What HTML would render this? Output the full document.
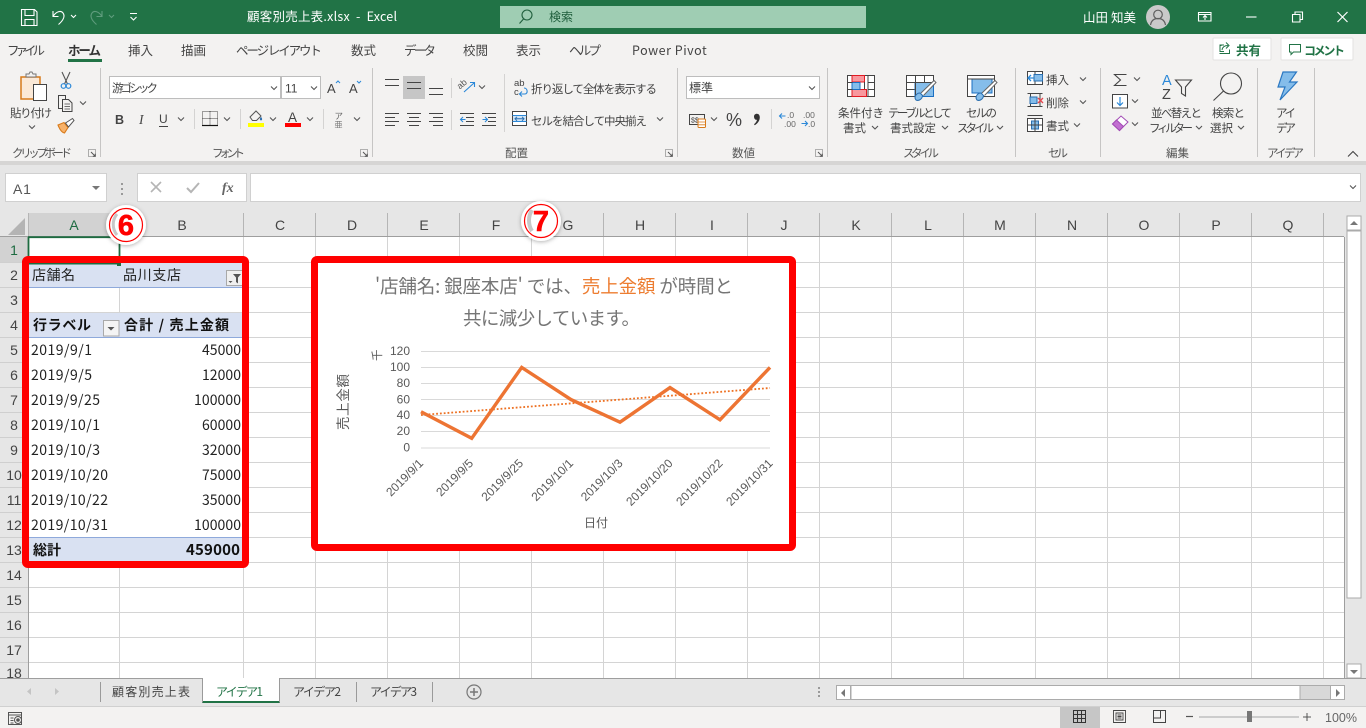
<!DOCTYPE html>
<html lang="ja"><head><meta charset="utf-8"><title>顧客別売上表.xlsx - Excel</title>
<style>
html,body{margin:0;padding:0;background:#fff;width:1366px;height:728px;overflow:hidden}
svg{display:block;position:absolute;left:0;top:0}
text{font-family:"Liberation Sans","Noto Sans CJK JP",sans-serif;white-space:pre}
.j{font-family:"Noto Sans CJK JP","Liberation Sans",sans-serif}
.s{font-family:"Liberation Serif",serif}
.r{font-size:11.5px;fill:#444}
.tab{font-size:12.5px;fill:#444}
.lb{font-size:11.5px;fill:#555}
.h{font-size:14px;fill:#444;text-anchor:middle}
.c{font-size:14px;fill:#222}
.g{font-size:11.5px;fill:#595959}
.gr{font-size:12px;fill:#595959;text-anchor:end}
.ln{fill:none;stroke:#444;stroke-width:1}
.ch{fill:none;stroke:#555;stroke-width:1.1}
</style></head><body>
<svg width="1366" height="728" viewBox="0 0 1366 728" xmlns="http://www.w3.org/2000/svg">
<defs>
<g id="chev"><path class="ch" d="M-3-1.5 0 1.5 3-1.5"/></g>
<g id="dlg"><path d="M-3.5-3.5h7v7h-7z" fill="none" stroke="#9a9a9a" stroke-width=".8"/><path d="M-1-1 3.2 3.2M3.2.8v2.4H.8" fill="none" stroke="#555" stroke-width="1"/></g>
<filter id="sh" x="-30%" y="-30%" width="160%" height="160%"><feDropShadow dx="0" dy="1" stdDeviation="2" flood-color="#000" flood-opacity=".3"/></filter>
</defs>

<!-- backgrounds -->
<rect width="1366" height="728" fill="#fff"/>
<rect width="1366" height="34" fill="#217346"/>
<rect y="34" width="1366" height="127" fill="#f3f2f1"/>
<rect y="161" width="1366" height="4" fill="#d6d5d4"/>
<rect y="165" width="1366" height="72" fill="#e6e6e6"/>

<!-- title bar -->
<g fill="none" stroke="#fff" stroke-width="1.1">
<path d="M21.5 9.5h13l2.5 2.5v13.500h-15.500zM25 9.500v6h9v-6M25 25.500v-6h9v6"/>
<path d="M53 11v5.500h5.500M53 16.500c3-5 8-6.500 10-3.500 2.500 3.500-.5 8-4.500 11.500"/>
<path d="M71 15l2.500 2.500L76 15"/>
<g stroke="#5f9c7d"><path d="M102 11v5.500h-5.500M102 16.500c-3-5-8-6.500-10-3.500-2.500 3.500.5 8 4.500 11.500"/><path d="M109 15l2.500 2.500 2.500-2.500"/></g>
<path d="M130 13.500h7M130.500 17l3 3 3-3"/>
</g>
<text class="j" x="247" y="21" font-size="12.5" fill="#fff" textLength="150">顧客別売上表.xlsx  -  Excel</text>
<rect x="500" y="6" width="366" height="22" fill="#9fcdb3"/>
<g fill="none" stroke="#1f5e3c" stroke-width="1.1"><circle cx="527" cy="15" r="5"/><path d="M523.500 19 519.500 23.500"/></g>
<text class="j" x="549" y="21" font-size="12" fill="#1f5e3c">検索</text>
<text class="j" x="1083" y="22" font-size="12.5" fill="#fff" textLength="53">山田 知美</text>
<circle cx="1158" cy="17" r="12" fill="#c9c9c9"/>
<g fill="none" stroke="#5f5f5f" stroke-width="1.2"><circle cx="1158" cy="14.500" r="4.300"/><path d="M1150.500 25c.8-4.500 3.500-6.500 7.500-6.500s6.700 2 7.500 6.500"/></g>
<g fill="none" stroke="#fff" stroke-width="1.1">
<path d="M1198.500 12.500h12.500v8.500h-12.500zM1198.500 14.500h12.500M1205 20v-4M1203 17.500l2-2 2 2"/>
<path d="M1246 17h10.500"/>
<path d="M1292.500 14.500h7.500v7.500h-7.500zM1295 14.500v-2.500h7.500v7.500h-2.500"/>
<path d="M1337.500 12 1347.500 22M1347.500 12 1337.500 22" stroke-width="1.2"/>
</g>

<!-- tabs -->
<g class="j">
<text class="tab j" x="7" y="55" textLength="38">ファイル</text>
<text class="tab j" x="68" y="55" textLength="33" font-weight="700" style="fill:#333">ホーム</text>
<text class="tab j" x="128" y="55">挿入</text>
<text class="tab j" x="181" y="55">描画</text>
<text class="tab j" x="236" y="55" textLength="86">ページ レイアウト</text>
<text class="tab j" x="351" y="55">数式</text>
<text class="tab j" x="404" y="55" textLength="32">データ</text>
<text class="tab j" x="463" y="55">校閲</text>
<text class="tab j" x="516" y="55">表示</text>
<text class="tab j" x="569" y="55" textLength="32">ヘルプ</text>
<text class="tab j" x="632" y="55" textLength="75" style="letter-spacing:.3px">Power Pivot</text>
</g>
<rect x="68" y="59" width="34" height="3" fill="#217346"/>
<rect x="1213" y="38" width="58" height="22" rx="1" fill="#fff" stroke="#e3e2e1"/>
<path d="M1221 46v-1h3M1224 51.500h-4v-7M1222 50c.5-3 2.500-4.500 6-4.500M1226 42.500l3 3-3 3M1219.500 53.500h10v-4" fill="none" stroke="#217346" stroke-width="1"/>
<text class="j" x="1236" y="55" font-size="12.5" font-weight="700" fill="#217346">共有</text>
<rect x="1281" y="38" width="72" height="22" rx="1" fill="#fff" stroke="#e3e2e1"/>
<path d="M1289.500 44.500h11v7.500h-7l-2.500 2.500v-2.500h-1.500z" fill="none" stroke="#217346"/>
<text class="j" x="1304" y="55" font-size="12" font-weight="700" fill="#217346" textLength="41">コメント</text>

<!-- separators -->
<g stroke="#c6c5c4" stroke-width="1"><path d="M100.500 68v89M372.500 68v89M677.500 68v89M827.500 68v89M1015.500 68v89M1100.500 68v89M1257.500 68v89M1314.500 68v89"/></g>
<g stroke="#d4d3d2" stroke-width="1"><path d="M194.500 109v20M240.500 109v20M323.500 109v20M451.500 78v20M451.500 110v20M504.500 74v58M771.500 109v20"/></g>

<!-- group labels -->
<g class="j">
<text class="lb j" x="12" y="157" textLength="60">クリップボード</text>
<text class="lb j" x="212" y="157" textLength="33">フォント</text>
<text class="lb j" x="505" y="157">配置</text>
<text class="lb j" x="732" y="157">数値</text>
<text class="lb j" x="903" y="157" textLength="36">スタイル</text>
<text class="lb j" x="1048" y="157" textLength="20">セル</text>
<text class="lb j" x="1166" y="157">編集</text>
<text class="lb j" x="1267" y="157" textLength="37">アイデア</text>
</g>
<use href="#dlg" x="92" y="153"/><use href="#dlg" x="364" y="153"/><use href="#dlg" x="669" y="153"/><use href="#dlg" x="819" y="153"/>

<!-- clipboard -->
<rect x="21" y="77" width="19" height="22" fill="#fbe9d7" stroke="#d87a1a" stroke-width="1.5"/>
<path d="M26 77v-3h3l1-2h2l1 2h3v3z" fill="#f3f2f1" stroke="#777"/>
<rect x="33.500" y="84.500" width="13" height="16" fill="#fff" stroke="#444"/>
<text class="r j" x="10" y="117" textLength="42">貼り付け</text>
<use href="#chev" x="32" y="127"/>
<g fill="none"><path d="M62 72l5.500 12M70 72l-5.500 12" stroke="#555" stroke-width="1.1"/><circle cx="63.500" cy="86" r="2.300" stroke="#2b88d8" stroke-width="1.2"/><circle cx="68.500" cy="86" r="2.300" stroke="#2b88d8" stroke-width="1.2"/></g>
<g fill="#f3f2f1" stroke="#444"><path d="M58.500 95.500h7v13h-7z"/><path d="M62.500 99.500h6l3.500 3.500v8.500h-9.500z"/><path d="M64.500 104h5.500M64.500 106.500h5.500M64.500 109h5.500" stroke-width=".8"/></g>
<use href="#chev" x="83" y="103"/>
<path d="M58 125l6-2.500 4 5-3.500 5.500c-3-.5-5-4-6.500-8z" fill="#f7b26a" stroke="#d87a1a" stroke-width="1.1"/>
<path d="M65.500 123l7-4.500 1.500 2-5.500 6.500z" fill="#fff" stroke="#555"/>

<!-- font -->
<rect x="109.500" y="76.500" width="171" height="22" fill="#fff" stroke="#bdbdbd"/>
<rect x="281.500" y="76.500" width="39" height="22" fill="#fff" stroke="#bdbdbd"/>
<text class="j" x="112" y="92" font-size="11.5" fill="#444" textLength="46">游ゴシック</text>
<use href="#chev" x="274" y="88"/>
<text x="285" y="92.500" font-size="12" fill="#444">11</text>
<use href="#chev" x="314" y="88"/>
<text x="327" y="93" font-size="13" fill="#444">A</text><path d="M336 83l2-2 2 2" fill="none" stroke="#2b88d8"/>
<text x="349" y="93" font-size="13" fill="#444">A</text><path d="M357 81l2 2 2-2" fill="none" stroke="#2b88d8"/>
<text x="115" y="124" font-size="12.5" font-weight="700" fill="#444">B</text>
<text class="s" x="139" y="124" font-size="13.5" font-style="italic" fill="#444">I</text>
<text x="159" y="123" font-size="12" fill="#444">U</text><path d="M159 126.500h9" stroke="#444"/>
<use href="#chev" x="181" y="119"/>
<path d="M202.500 111.500h15v14h-15zM210 111.500v14M202.500 118.500h15" fill="none" stroke="#444" stroke-dasharray="1 1"/><path d="M202 125.500h16" stroke="#111" stroke-width="1.2"/>
<use href="#chev" x="227" y="119"/>
<path d="M250 117l6-6 5 5-4.500 4.500h-4z" fill="#f3f2f1" stroke="#555"/><path d="M261 117c1.500 1.500 1.500 3 0 3.500-1.500-.5-1.500-2 0-3.500z" fill="#2b6fb0"/><rect x="248" y="123" width="16" height="4" fill="#ff0"/>
<use href="#chev" x="273" y="119"/>
<text x="288" y="122" font-size="13.5" fill="#444">A</text><rect x="285" y="123" width="16" height="4" fill="#f00"/>
<use href="#chev" x="310" y="119"/>
<text class="j" x="334.500" y="119" font-size="8.5" fill="#666">ア</text><text class="j" x="334.500" y="127.500" font-size="8" fill="#777">亜</text>
<use href="#chev" x="357" y="119"/>

<!-- alignment -->
<rect x="403" y="76" width="22" height="23" fill="#c6c6c6"/>
<g stroke="#444" stroke-width="1" fill="none">
<path d="M385 79.500h14M385 85.500h14M407 82.500h14M407 88.500h14M429 88.500h14M429 94.500h14"/>
<path d="M385 113.500h14M385 117.500h10M385 121.500h14M385 125.500h10"/>
<path d="M407 113.500h14M409 117.500h10M407 121.500h14M409 125.500h10"/>
<path d="M429 113.500h14M433 117.500h10M429 121.500h14M433 125.500h10"/>
<path d="M460 113.500h14M460 125.500h14M466 117.500h8M466 121.500h8M482 113.500h14M482 125.500h14M488 117.500h8M488 121.500h8"/>
</g>
<path d="M460.500 119.500h5M463 117l-2.500 2.500 2.500 2.500M482.500 119.500h5M485 117l2.500 2.500-2.500 2.500" fill="none" stroke="#2b88d8" stroke-width="1.1"/>
<text x="459" y="87" font-size="9" fill="#555" transform="rotate(-40 463 87)">ab</text>
<path d="M464 92l10-9M470 82.500h4.500v4.500" fill="none" stroke="#2b88d8" stroke-width="1.1"/>
<use href="#chev" x="482" y="87"/>
<text x="514" y="86" font-size="9.5" fill="#444">ab</text><text x="514" y="95" font-size="9.5" fill="#444">c</text>
<path d="M520 94h5c3 0 3-6-1-6M522 91.500l-2.500 2.500 2.500 2.500" fill="none" stroke="#2b88d8" stroke-width="1.1"/>
<text class="r j" x="531" y="93" textLength="126">折り返して全体を表示する</text>
<rect x="512.500" y="111.500" width="14" height="14" fill="#fff" stroke="#444"/><rect x="513" y="116" width="13" height="5.5" fill="#cfe4f7"/>
<path d="M515 118.800h9M517 116.800l-2 2 2 2M522 116.800l2 2-2 2" fill="none" stroke="#2b6fb0"/><path d="M512.500 115.500h14M512.500 121.500h14" stroke="#2b88d8"/>
<text class="r j" x="531" y="125" textLength="116">セルを結合して中央揃え</text>
<use href="#chev" x="660" y="119"/>

<!-- number -->
<rect x="686.500" y="76.500" width="133" height="22" fill="#fff" stroke="#bdbdbd"/>
<text class="j" x="689" y="92" font-size="12" fill="#444">標準</text>
<use href="#chev" x="812" y="88"/>
<rect x="689.500" y="114.500" width="15" height="10" fill="#f3f2f1" stroke="#444"/>
<text x="691" y="122.500" font-size="7" fill="#444">$$</text>
<rect x="698" y="119" width="7.500" height="8.500" rx="1" fill="#fff" stroke="#d87a1a"/><path d="M698 122h7.500M698 124.800h7.500" stroke="#d87a1a" stroke-width=".8"/>
<use href="#chev" x="714" y="119"/>
<text x="726" y="126" font-size="18" fill="#444">%</text>
<path d="M754 116.500c0-1.700 1.300-2.800 2.800-2.800 1.800 0 3 1.400 3 3.600 0 3.400-2.200 6.300-5 8l-.8-1c1.600-1.300 2.800-3 3-4.500-1.800.4-3-1.300-3-3.300z" fill="#333"/>
<g font-size="8.5" fill="#666"><text x="787" y="118">.0</text><text x="784" y="127">.00</text><text x="803" y="118">.00</text><text x="808" y="127">.0</text></g>
<path d="M779.500 116h6M782 113.500l-2.500 2.500 2.500 2.500M801.500 123.500h6M805 121l2.500 2.500-2.500 2.500" fill="none" stroke="#2b88d8" stroke-width="1.1"/>

<!-- styles -->
<g stroke="#444" fill="#fff">
<rect x="847.500" y="75.500" width="27" height="21"/>
</g>
<rect x="852" y="75.500" width="12.500" height="6.500" fill="#f8989e" stroke="#e21b23"/>
<rect x="852" y="89.500" width="14.500" height="7" fill="#f8989e" stroke="#e21b23"/>
<rect x="852" y="82.500" width="8" height="7" fill="#85bdea" stroke="#1b6fc2"/>
<path d="M847.500 82.500h5M847.500 89.500h5M868 82.500h7M868 89.500h7M868 75.500v21M864.500 82v7" stroke="#444" fill="none"/>
<rect x="906.500" y="75.500" width="27" height="21" fill="#fff" stroke="#444"/>
<rect x="915" y="82.500" width="18.500" height="14" fill="#85bdea" stroke="#1b6fc2"/>
<path d="M906.500 82.500h27M906.500 89.500h8M915.500 75.500v21M924.500 75.500v7" stroke="#444" fill="none"/>
<path d="M916 100c-2.500-3 .5-7 4-7l2.500 2.500c0 3-3.500 6-6.500 4.500z" fill="#85bdea" stroke="#2b6fb0"/><path d="M921 93l13-12.500 2 2-12.500 13" fill="#fff" stroke="#666"/>
<rect x="967.500" y="75.500" width="27" height="21" fill="#fff" stroke="#444"/>
<rect x="972" y="79" width="20" height="14" fill="#85bdea" stroke="#1b6fc2"/>
<path d="M967.500 79h27" stroke="#444" fill="none"/>
<path d="M977 100c-2.500-3 .5-7 4-7l2.500 2.500c0 3-3.500 6-6.500 4.500z" fill="#85bdea" stroke="#2b6fb0"/><path d="M982 93l13-12.500 2 2-12.500 13" fill="#fff" stroke="#666"/>
<g class="j">
<text class="r j" x="838" y="117" textLength="46">条件付き</text>
<text class="r j" x="843" y="132">書式</text>
<text class="r j" x="888" y="117" textLength="64">テーブルとして</text>
<text class="r j" x="890" y="132">書式設定</text>
<text class="r j" x="966" y="117" textLength="31">セルの</text>
<text class="r j" x="957" y="132" textLength="37">スタイル</text>
</g>
<use href="#chev" x="875" y="127.5"/><use href="#chev" x="945" y="127.5"/><use href="#chev" x="1000" y="127.5"/>

<!-- cells -->
<g fill="#fff" stroke="#444">
<path d="M1027.500 71.500h15v13h-15zM1027.500 78h15M1035 71.500v13"/>
<rect x="1034" y="74.500" width="8.500" height="6.500" fill="#85bdea" stroke="#2b6fb0"/>
<path d="M1027.500 93.500h15M1027.500 106.500h15M1030.500 93.500v13M1040 93.500v13" fill="none"/>
<rect x="1030" y="97" width="7" height="6.5" fill="#85bdea" stroke="#2b6fb0"/>
<rect x="1027.500" y="118.500" width="15" height="13"/>
<rect x="1031.500" y="121" width="7" height="8" fill="#85bdea" stroke="#2b6fb0"/>
<path d="M1027.500 125h15M1035 118.500v13M1027.500 115.500h15" fill="none"/>
</g>
<path d="M1028 78h6M1031 75l-3 3 3 3" fill="none" stroke="#2b88d8" stroke-width="1.3"/>
<path d="M1038 98l5 5M1043 98l-5 5" stroke="#e8484f" stroke-width="1.4"/>
<g>
<text class="j" x="1046" y="84" font-size="11.5" fill="#444">挿入</text>
<text class="j" x="1046" y="107" font-size="11.5" fill="#444">削除</text>
<text class="j" x="1046" y="130" font-size="11.5" fill="#444">書式</text>
</g>
<use href="#chev" x="1083" y="79"/><use href="#chev" x="1083" y="102"/><use href="#chev" x="1077" y="125"/>

<!-- editing -->
<path d="M1126.500 74.500h-12l6 5.500-6 5.500h12" fill="none" stroke="#444" stroke-width="1.1"/>
<use href="#chev" x="1137" y="79"/>
<rect x="1112.500" y="94.500" width="15" height="13.500" fill="#fff" stroke="#444"/>
<path d="M1120 97v8M1117 102.500l3 3 3-3" fill="none" stroke="#2b88d8" stroke-width="1.2"/>
<use href="#chev" x="1135" y="101"/>
<path d="M1112.500 124l8.500-8 7 6-8.500 8.500z" fill="#fff" stroke="#a24bb5"/><path d="M1112.500 124l4-4 7 6.500-4 4z" fill="#c26fd1" stroke="#a24bb5"/>
<use href="#chev" x="1135" y="124"/>
<text x="1162" y="85" font-size="14.5" fill="#2b88d8">A</text>
<text x="1162" y="99" font-size="14.5" fill="#444">Z</text>
<path d="M1175.500 80h16l-6 7v9l-4-2.500v-6.500z" fill="none" stroke="#444" stroke-width="1.1"/>
<text class="r j" x="1151" y="117" textLength="51">並べ替えと</text>
<text class="r j" x="1149" y="132" textLength="44">フィルター</text>
<use href="#chev" x="1199" y="127.5"/>
<g fill="none" stroke="#444" stroke-width="1.1"><circle cx="1231" cy="83.500" r="10.500"/><path d="M1223.500 91 1213.500 100.500"/></g>
<text class="r j" x="1212" y="117" textLength="33">検索と</text>
<text class="r j" x="1210" y="132">選択</text>
<use href="#chev" x="1241" y="127.5"/>

<!-- ideas -->
<path d="M1283 72h13.500l-7 10h7.500l-17 18 5-13h-7z" fill="#85bdea" stroke="#2b78c2" stroke-width="1.2"/>
<text class="r j" x="1276" y="117" textLength="20">アイ</text>
<text class="r j" x="1276" y="132" textLength="20">デア</text>
<path d="M1348 156.500l5-5 5 5" fill="none" stroke="#444" stroke-width="1.1"/>

<!-- formula bar -->
<rect x="5.500" y="173.500" width="101" height="28" fill="#fff" stroke="#d0d0d0"/>
<text x="13" y="194" font-size="14" fill="#555" letter-spacing=".8">A1</text>
<path d="M92 186h8l-4 4z" fill="#777"/>
<g fill="#999"><rect x="121" y="183" width="2" height="2"/><rect x="121" y="188" width="2" height="2"/><rect x="121" y="193" width="2" height="2"/></g>
<rect x="137.500" y="173.500" width="109" height="28" fill="#fff" stroke="#d0d0d0"/>
<path d="M151 182l10 10M161 182l-10 10" stroke="#b5b5b5" stroke-width="1.6"/>
<path d="M187 188l4 4 8-9" fill="none" stroke="#b5b5b5" stroke-width="2"/>
<text class="s" x="222" y="192" font-size="14" font-style="italic" font-weight="700" fill="#666">fx</text>
<rect x="250.500" y="173.500" width="1110" height="28" fill="#fff" stroke="#d0d0d0"/>
<use href="#chev" x="1353" y="187"/>

<!-- headers -->
<rect y="213" width="1344" height="24" fill="#e6e6e6"/>
<rect x="29" y="213" width="91" height="24" fill="#d2d2d2"/>
<rect x="0" y="237" width="29" height="441" fill="#e6e6e6"/>
<rect x="0" y="237" width="28" height="25" fill="#d2d2d2"/>
<path d="M25 218v17H8z" fill="#b4b4b4"/>
<g stroke="#b5b5b5"><path d="M28.500 213v24M119.500 213v24M243.500 213v24M315.500 213v24M387.500 213v24M459.500 213v24M531.500 213v24M603.500 213v24M675.500 213v24M747.500 213v24M819.500 213v24M891.500 213v24M963.500 213v24M1035.500 213v24M1107.500 213v24M1179.500 213v24M1251.500 213v24M1323.500 213v24"/>
<path d="M0 262.500h28M0 287.500h28M0 312.500h28M0 337.500h28M0 362.500h28M0 387.500h28M0 412.500h28M0 437.500h28M0 462.500h28M0 487.500h28M0 512.500h28M0 537.500h28M0 562.500h28M0 587.500h28M0 612.500h28M0 637.500h28M0 662.500h28" stroke="#cfcfcf"/></g>
<path d="M0 236.500h1344M28.500 237v441" stroke="#9e9e9e"/>
<g>
<text class="h" x="74" y="230" style="fill:#1d6b40">A</text><text class="h" x="182" y="230">B</text><text class="h" x="280" y="230">C</text><text class="h" x="352" y="230">D</text><text class="h" x="424" y="230">E</text><text class="h" x="496" y="230">F</text><text class="h" x="568" y="230">G</text><text class="h" x="640" y="230">H</text><text class="h" x="712" y="230">I</text><text class="h" x="784" y="230">J</text><text class="h" x="856" y="230">K</text><text class="h" x="928" y="230">L</text><text class="h" x="1000" y="230">M</text><text class="h" x="1072" y="230">N</text><text class="h" x="1144" y="230">O</text><text class="h" x="1216" y="230">P</text><text class="h" x="1288" y="230">Q</text>
<text class="h" x="14" y="255" style="fill:#1d6b40">1</text><text class="h" x="14" y="280">2</text><text class="h" x="14" y="305">3</text><text class="h" x="14" y="330">4</text><text class="h" x="14" y="355">5</text><text class="h" x="14" y="380">6</text><text class="h" x="14" y="405">7</text><text class="h" x="14" y="430">8</text><text class="h" x="14" y="455">9</text><text class="h" x="14" y="480">10</text><text class="h" x="14" y="505">11</text><text class="h" x="14" y="530">12</text><text class="h" x="14" y="555">13</text><text class="h" x="14" y="580">14</text><text class="h" x="14" y="605">15</text><text class="h" x="14" y="630">16</text><text class="h" x="14" y="655">17</text><text class="h" x="14" y="678">18</text>
</g>

<!-- grid -->
<g stroke="#d4d4d4"><path d="M119.500 237v441M243.500 237v441M315.500 237v441M387.500 237v441M459.500 237v441M531.500 237v441M603.500 237v441M675.500 237v441M747.500 237v441M819.500 237v441M891.500 237v441M963.500 237v441M1035.500 237v441M1107.500 237v441M1179.500 237v441M1251.500 237v441M1323.500 237v441"/>
<path d="M29 262.500h1315M29 287.500h1315M29 312.500h1315M29 337.500h1315M29 362.500h1315M29 387.500h1315M29 412.500h1315M29 437.500h1315M29 462.500h1315M29 487.500h1315M29 512.500h1315M29 537.500h1315M29 562.500h1315M29 587.500h1315M29 612.500h1315M29 637.500h1315M29 662.500h1315"/></g>

<!-- scrollbar v -->
<rect x="1345" y="213" width="21" height="465" fill="#e6e6e6"/>
<path d="M1344.500 237v441" stroke="#9e9e9e"/>
<rect x="1347" y="216" width="14" height="14" fill="#fff" stroke="#ababab"/><path d="M1350 225l4-4 4 4z" fill="#777"/>
<rect x="1347" y="231" width="14" height="367" fill="#fff" stroke="#ababab"/>
<rect x="1347" y="664" width="14" height="14" fill="#fff" stroke="#ababab"/><path d="M1350 670h8l-4 4z" fill="#777"/>

<!-- pivot -->
<rect x="29" y="263" width="213" height="24" fill="#d9e1f2"/>
<rect x="29" y="313" width="213" height="24" fill="#d9e1f2"/>
<rect x="29" y="338" width="213" height="199" fill="#fff"/>
<rect x="29" y="538" width="213" height="24" fill="#d9e1f2"/>
<path d="M29 287.500h213M29 337.500h213M29 537.500h213" stroke="#8ea9db"/>
<g class="j">
<text class="c j" x="32" y="280" textLength="43">店舗名</text>
<text class="c j" x="123" y="280" textLength="58">品川支店</text>
<text class="c j" x="33" y="330" textLength="58" font-weight="700" style="fill:#111">行ラベル</text>
<text class="c j" x="124" y="330" textLength="105" font-weight="700" style="fill:#111">合計 / 売上金額</text>
<text class="c j" x="33" y="555" textLength="28" font-weight="700" style="fill:#111">総計</text>
<text class="c j" x="186" y="555" textLength="54" font-weight="700" style="fill:#111;font-size:15px">459000</text>
<text class="c j" x="31" y="355" textLength="61">2019/9/1</text><text class="c j" x="202" y="355" textLength="39">45000</text>
<text class="c j" x="31" y="380" textLength="61">2019/9/5</text><text class="c j" x="202" y="380" textLength="39">12000</text>
<text class="c j" x="31" y="405" textLength="69">2019/9/25</text><text class="c j" x="194" y="405" textLength="47">100000</text>
<text class="c j" x="31" y="430" textLength="69">2019/10/1</text><text class="c j" x="202" y="430" textLength="39">60000</text>
<text class="c j" x="31" y="455" textLength="69">2019/10/3</text><text class="c j" x="202" y="455" textLength="39">32000</text>
<text class="c j" x="31" y="480" textLength="77">2019/10/20</text><text class="c j" x="202" y="480" textLength="39">75000</text>
<text class="c j" x="31" y="505" textLength="77">2019/10/22</text><text class="c j" x="202" y="505" textLength="39">35000</text>
<text class="c j" x="31" y="530" textLength="77">2019/10/31</text><text class="c j" x="194" y="530" textLength="47">100000</text>
</g>
<rect x="226.500" y="270.500" width="16" height="15" fill="#f0f0f0" stroke="#a9a9a9"/>
<path d="M233 274h8l-3 3.500v6l-2-1.500v-4.500zM228.500 281h4l-2 2z" fill="#555"/>
<rect x="103.500" y="320.500" width="15.500" height="15.500" fill="#f4f4f4" stroke="#a9a9a9"/>
<path d="M107.500 327h7l-3.500 3.500z" fill="#555"/>

<!-- selection -->
<path d="M28.500 237v19M119.500 237v19M28 237.200h92.500" stroke="#1d6b40" stroke-width="1.8" fill="none"/>
<rect x="29" y="263" width="89" height="1.5" fill="#1d6b40"/>
<rect x="117" y="263" width="4" height="3" fill="#1d6b40"/>

<!-- chart -->
<rect x="318" y="263" width="471" height="281" fill="#fff"/>
<text class="j" x="375" y="293" font-size="18.5" fill="#757575" textLength="358">'店舗名: 銀座本店' では、<tspan fill="#ed7d31">売上金額</tspan> が時間と</text>
<text class="j" x="463" y="325" font-size="18.5" fill="#757575" textLength="177">共に減少しています。</text>
<g stroke="#d9d9d9"><path d="M421 351.500h349M421 367.500h349M421 383.500h349M421 399.500h349M421 415.500h349M421 431.500h349M421 448h349"/></g>
<text class="gr" x="410" y="355">120</text><text class="gr" x="410" y="371">100</text><text class="gr" x="410" y="387">80</text><text class="gr" x="410" y="403.5">60</text><text class="gr" x="410" y="419">40</text><text class="gr" x="410" y="435">20</text><text class="gr" x="410" y="451.5">0</text>
<text class="g j" transform="rotate(-90 381 361)" x="381" y="361">千</text>
<text class="g j" transform="rotate(-90 348 430)" x="348" y="430" textLength="56" style="font-size:13.5px">売上金額</text>
<path d="M421 415 770 388" stroke="#ed7021" stroke-width="1.8" stroke-dasharray="1.8 2" fill="none"/>
<path d="M421 411.700 471.700 438.300 521.700 367.400 571 399.600 620 422.200 670 387.600 720 419.800 770 367.400" fill="none" stroke="#ed7433" stroke-width="3.4"/>
<text class="gr" transform="rotate(-45 424 464)" x="424" y="464">2019/9/1</text>
<text class="gr" transform="rotate(-45 474 464)" x="474" y="464">2019/9/5</text>
<text class="gr" transform="rotate(-45 524 464)" x="524" y="464">2019/9/25</text>
<text class="gr" transform="rotate(-45 574 464)" x="574" y="464">2019/10/1</text>
<text class="gr" transform="rotate(-45 623.500 464)" x="623.500" y="464">2019/10/3</text>
<text class="gr" transform="rotate(-45 673.500 464)" x="673.500" y="464">2019/10/20</text>
<text class="gr" transform="rotate(-45 723.500 464)" x="723.500" y="464">2019/10/22</text>
<text class="gr" transform="rotate(-45 773.500 464)" x="773.500" y="464">2019/10/31</text>
<text class="j" x="584" y="527" font-size="12" fill="#595959" textLength="24">日付</text>

<!-- red frames -->
<rect x="25.500" y="259.500" width="220" height="305" rx="2.500" fill="none" stroke="#f00" stroke-width="7"/>
<rect x="314.500" y="259.500" width="478" height="288" rx="2.500" fill="none" stroke="#f00" stroke-width="7"/>

<!-- callouts -->
<circle cx="126" cy="225" r="20" fill="#fff" filter="url(#sh)"/>
<circle cx="126" cy="225" r="16.500" fill="none" stroke="#f00" stroke-width="1.2"/>
<path d="M117 214c-5 6-5 15 0 21" fill="none" stroke="#c8c8c8" stroke-width="3"/>
<text x="126" y="235" font-size="29" font-weight="700" fill="#f00" text-anchor="middle" stroke="#f00" stroke-width=".6">6</text>
<circle cx="541" cy="221" r="20" fill="#fff" filter="url(#sh)"/>
<circle cx="541" cy="221" r="16.500" fill="none" stroke="#f00" stroke-width="1.2"/>
<path d="M532 210c-4 6-4 15 0 21" fill="none" stroke="#c8c8c8" stroke-width="4"/>
<text x="541" y="231" font-size="29" font-weight="700" fill="#f00" text-anchor="middle" stroke="#f00" stroke-width=".6">7</text>

<!-- sheet tabs -->
<rect y="678" width="1366" height="28" fill="#e6e6e6"/>
<path d="M0 678.500h1366" stroke="#9e9e9e"/>
<path d="M31 688l-4 3.500 4 3.500zM55 688l4 3.500-4 3.500z" fill="#c4c4c4"/>
<path d="M100.500 682v20M356.500 682v20M432.500 682v20" stroke="#9a9a9a"/>
<rect x="203" y="678" width="76" height="24" fill="#fff"/>
<rect x="202" y="701" width="78" height="2" fill="#217346"/>
<path d="M202.500 678.500v24M279.500 678.500v24" stroke="#9a9a9a"/>
<text class="j" x="112" y="696" font-size="12" fill="#444" textLength="78">顧客別売上表</text>
<text class="j" x="216" y="696" font-size="12" fill="#217346" textLength="47">アイデア1</text>
<text class="j" x="293" y="696" font-size="12" fill="#444" textLength="48">アイデア2</text>
<text class="j" x="370" y="696" font-size="12" fill="#444" textLength="47">アイデア3</text>
<circle cx="474" cy="692" r="7" fill="none" stroke="#777" stroke-width="1.2"/><path d="M470 692h8M474 688v8" stroke="#777" stroke-width="1.5"/>
<g fill="#9a9a9a"><rect x="818" y="687" width="2" height="2"/><rect x="818" y="691" width="2" height="2"/><rect x="818" y="695" width="2" height="2"/></g>
<rect x="836.500" y="685.500" width="494" height="14" fill="#d8d8d8" stroke="#ababab"/>
<rect x="851" y="685.500" width="449" height="14" fill="#fff" stroke="#ababab"/>
<rect x="836.500" y="685.500" width="14" height="14" fill="#fff" stroke="#ababab"/><path d="M845 689v8l-4-4z" fill="#777"/>
<rect x="1330.500" y="685.500" width="14" height="14" fill="#fff" stroke="#ababab"/><path d="M1336 689v8l4-4z" fill="#777"/>

<!-- status bar -->
<rect y="706" width="1366" height="22" fill="#f3f2f1"/>
<path d="M0 706.500h1366" stroke="#d0d0d0"/>
<g fill="none" stroke="#555"><path d="M8.500 712.500h13v12h-13zM8.500 715h13"/><circle cx="18" cy="720" r="3.500" fill="#f3f2f1"/><circle cx="18" cy="720" r="1.300" fill="#555"/><path d="M10.500 718h3M10.500 720.500h3M10.500 723h3"/></g>
<rect x="1060" y="707" width="40" height="21" fill="#c6c6c6"/>
<path d="M1073.500 710.500h12v12h-12zM1073.500 714.500h12M1073.500 718.500h12M1077.500 710.500v12M1081.500 710.500v12" fill="none" stroke="#333"/>
<path d="M1113.500 710.500h12v12h-12zM1116 713h7v7h-7zM1117.500 715h4M1117.500 716.500h4M1117.500 718h4" fill="none" stroke="#444" stroke-width=".9"/>
<path d="M1153.500 710.500h12v12h-12zM1153.500 718h7v-7.500M1160.500 710.500v7.500" fill="none" stroke="#444"/>
<path d="M1186 716.500h7" stroke="#555" stroke-width="1.2"/>
<path d="M1199 717h100" stroke="#a6a6a6"/>
<rect x="1247" y="711" width="5" height="11" fill="#777"/>
<path d="M1303 717h8M1307 713v8" stroke="#555"/>
<text x="1325" y="722" font-size="12.5" fill="#666">100%</text>
</svg>
</body></html>
